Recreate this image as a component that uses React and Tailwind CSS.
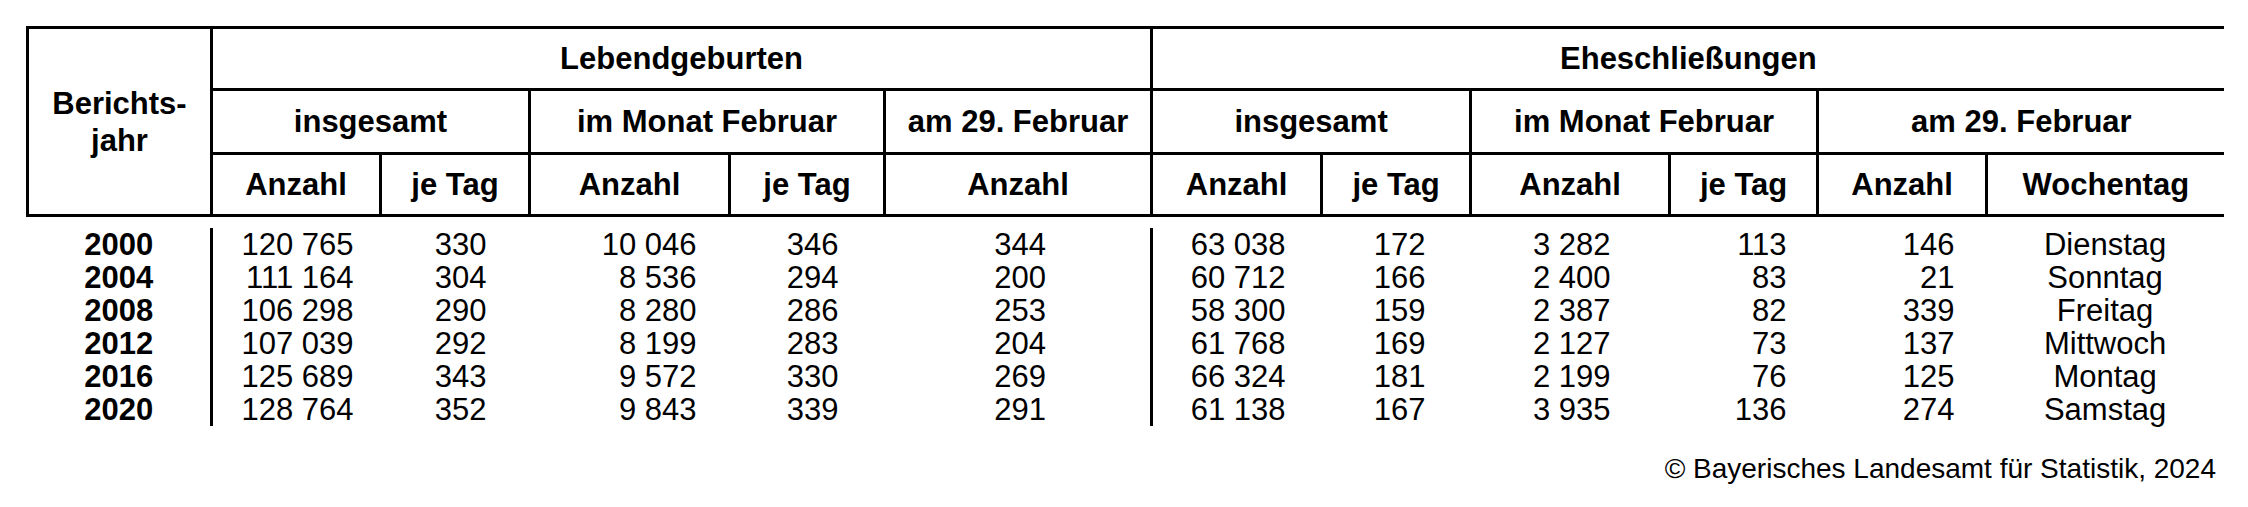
import React from 'react';

const rows = [
  ['2000', '120 765', '330', '10 046', '346', '344', '63 038', '172', '3 282', '113', '146', 'Dienstag'],
  ['2004', '111 164', '304', '8 536', '294', '200', '60 712', '166', '2 400', '83', '21', 'Sonntag'],
  ['2008', '106 298', '290', '8 280', '286', '253', '58 300', '159', '2 387', '82', '339', 'Freitag'],
  ['2012', '107 039', '292', '8 199', '283', '204', '61 768', '169', '2 127', '73', '137', 'Mittwoch'],
  ['2016', '125 689', '343', '9 572', '330', '269', '66 324', '181', '2 199', '76', '125', 'Montag'],
  ['2020', '128 764', '352', '9 843', '339', '291', '61 138', '167', '3 935', '136', '274', 'Samstag'],
];

// per column: alignment + padding, borders only where the picture has them
const cellClass = [
  'text-center font-bold',
  'text-right pr-[27px] border-l-[3px] border-black',
  'text-right pr-[43px]',
  'text-right pr-[33px]',
  'text-right pr-[46px]',
  'text-right pr-[104px]',
  'text-right pr-[36px] border-l-[3px] border-black',
  'text-right pr-[45px]',
  'text-right pr-[59px]',
  'text-right pr-[31px]',
  'text-right pr-[32px]',
  'text-center',
];

const widths = [
  'w-[184px]', 'w-[169px]', 'w-[149px]', 'w-[200px]', 'w-[155px]', 'w-[267px]',
  'w-[170px]', 'w-[149px]', 'w-[199px]', 'w-[148px]', 'w-[169px]', 'w-[237px]',
];

const th = 'border-t-[3px] border-b-[3px] border-l-[3px] border-black font-bold p-0 text-center align-middle';

export default function App() {
  return (
    <div className="h-[507px] w-[2248px] overflow-hidden bg-white pt-[26px] text-black font-['Liberation_Sans',Arial,sans-serif]">
      <table className="ml-[26px] w-[2196px] table-fixed border-collapse">
        <colgroup>
          {widths.map((w, i) => (
            <col key={i} className={w} />
          ))}
        </colgroup>
        <thead className="text-[31px] leading-none">
          <tr className="h-[62px]">
            <th rowSpan={3} className={`${th} border-l-0 leading-[37px]`}>
              Berichts-
              <br />
              jahr
            </th>
            <th colSpan={5} className={th}>Lebendgeburten</th>
            <th colSpan={6} className={th}>Eheschließungen</th>
          </tr>
          <tr className="h-[64px]">
            <th colSpan={2} className={th}>insgesamt</th>
            <th colSpan={2} className={th}>im Monat Februar</th>
            <th className={th}>am 29. Februar</th>
            <th colSpan={2} className={th}>insgesamt</th>
            <th colSpan={2} className={th}>im Monat Februar</th>
            <th colSpan={2} className={th}>am 29. Februar</th>
          </tr>
          <tr className="h-[62px]">
            <th className={th}>Anzahl</th>
            <th className={th}>je Tag</th>
            <th className={th}>Anzahl</th>
            <th className={th}>je Tag</th>
            <th className={th}>Anzahl</th>
            <th className={th}>Anzahl</th>
            <th className={th}>je Tag</th>
            <th className={th}>Anzahl</th>
            <th className={th}>je Tag</th>
            <th className={th}>Anzahl</th>
            <th className={th}>Wochentag</th>
          </tr>
        </thead>
        <tbody className="text-[31px] leading-[33px]">
          <tr className="h-[12px]">
            <td colSpan={12} className="p-0" />
          </tr>
          {rows.map((r) => (
            <tr key={r[0]} className="h-[33px]">
              {r.map((v, i) => (
                <td key={i} className={`p-0 whitespace-nowrap ${cellClass[i]}`}>
                  {v}
                </td>
              ))}
            </tr>
          ))}
        </tbody>
      </table>
      <div className="mt-[27px] flex justify-end pr-[32px] text-[28px] leading-[32px]">
        © Bayerisches Landesamt für Statistik, 2024
      </div>
    </div>
  );
}
